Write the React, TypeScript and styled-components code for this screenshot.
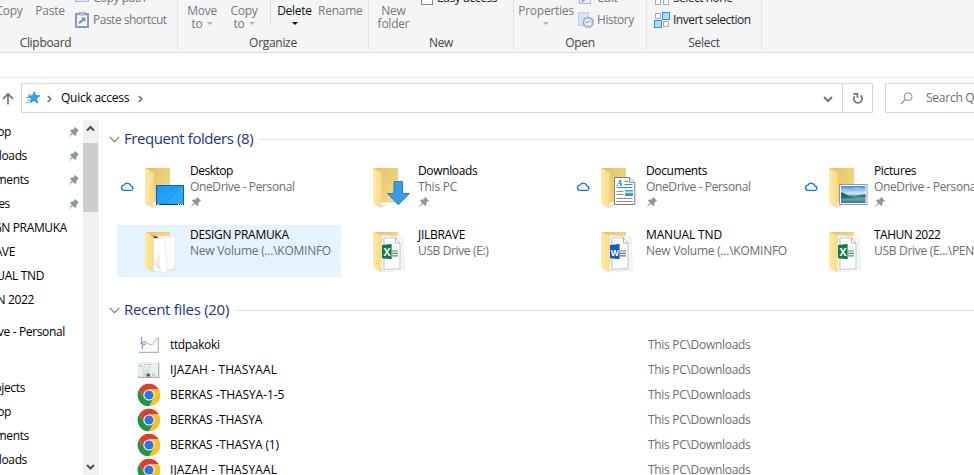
import React from "react";
import styled, { createGlobalStyle } from "styled-components";

const Global = createGlobalStyle`
  * { box-sizing: border-box; }
  html, body { margin: 0; padding: 0; overflow: hidden; background: #fff; }
  body { font: 12px/16px "Open Sans", "Noto Sans", sans-serif; color: #000; letter-spacing: -0.25px; }
  svg { display: block; flex: none; }
`;

const Window = styled.div`
  width: 974px;
  height: 475px;
  overflow: hidden;
  display: flex;
  flex-direction: column;
`;

/* ---------- Ribbon ---------- */
const Ribbon = styled.div`
  height: 53px;
  flex: none;
  display: flex;
  background: #f4f5f7;
  border-bottom: 1px solid #dadbdc;
  overflow: hidden;
`;
const Group = styled.section<{ $width: number; $cut?: number }>`
  width: ${(p) => p.$width}px;
  margin-left: ${(p) => -(p.$cut ?? 0)}px;
  flex: none;
  height: 49px;
  border-right: 1px solid #e1e2e4;
  display: flex;
  flex-direction: column;
`;
const GroupBody = styled.div<{ $pad: number }>`
  height: 35px;
  flex: none;
  display: flex;
  align-items: flex-start;
  padding-left: ${(p) => p.$pad}px;
`;
const GroupTitle = styled.div<{ $shift?: number }>`
  text-align: center;
  color: #444;
  white-space: nowrap;
  height: 14px;
  line-height: 16px;
  padding-left: ${(p) => p.$shift ?? 0}px;
  letter-spacing: -0.3px;
`;
const BigButton = styled.div<{ $width: number; $active?: boolean }>`
  width: ${(p) => p.$width}px;
  flex: none;
  padding-top: 4px;
  line-height: 13px;
  text-align: center;
  white-space: nowrap;
  color: ${(p) => (p.$active ? "#111" : "#777")};
`;
const SecondLine = styled.div`
  height: 13px;
  display: flex;
  align-items: center;
  justify-content: center;
  gap: 4px;
`;
const Caret = styled.i<{ $active?: boolean }>`
  border: 3px solid transparent;
  border-top-color: ${(p) => (p.$active ? "#111" : "#b0b3b8")};
  border-bottom: 0;
`;
const Divider = styled.div`
  width: 1px;
  height: 25px;
  margin-left: 6px;
  background: #dcdddf;
`;
const SmallButtons = styled.div<{ $left?: number }>`
  margin-top: -13px;
  margin-left: ${(p) => p.$left ?? 0}px;
  display: flex;
  flex-direction: column;
`;
const SmallButton = styled.div<{ $active?: boolean; $gap?: number; $track?: number }>`
  height: 22px;
  display: flex;
  align-items: center;
  gap: ${(p) => p.$gap ?? 3}px;
  white-space: nowrap;
  letter-spacing: ${(p) => p.$track ?? -0.5}px;
  color: ${(p) => (p.$active ? "#222" : "#777")};
`;

/* ---------- Address row ---------- */
const Spacer = styled.div`
  height: 25px;
  flex: none;
  border-bottom: 1px solid #e8e8e8;
`;
const AddressRow = styled.div`
  height: 42px;
  flex: none;
  display: flex;
  align-items: flex-start;
  padding-top: 5px;
`;
const UpButton = styled.div`
  width: 21px;
  height: 30px;
  padding: 9px 0 0 2px;
`;
const AddressBox = styled.div`
  width: 822px;
  height: 30px;
  border: 1px solid #d9d9d9;
  display: flex;
  align-items: center;
  padding-left: 4px;
`;
const CrumbArrow = styled.div`
  padding-top: 2px;
  margin-left: 6px;
`;
const Crumb = styled.span`
  margin: 0 3px 0 9px;
  white-space: nowrap;
`;
const DropArrow = styled.div`
  margin-left: auto;
  width: 29px;
  display: flex;
  justify-content: center;
  padding: 2px 0 0 0;
`;
const RefreshBox = styled.div`
  width: 31px;
  height: 30px;
  margin-left: -1px;
  border: 1px solid #d9d9d9;
  display: flex;
  align-items: center;
  justify-content: center;
`;
const SearchBox = styled.div`
  flex: 1;
  height: 30px;
  margin-left: 12px;
  border: 1px solid #d9d9d9;
  border-right: 0;
  display: flex;
  align-items: center;
  gap: 13px;
  padding-left: 14px;
  overflow: hidden;
  color: #6d6d6d;
  white-space: nowrap;
`;

/* ---------- Body ---------- */
const Body = styled.div`
  flex: 1;
  min-height: 0;
  display: flex;
`;
const Tree = styled.nav`
  width: 83px;
  flex: none;
  overflow: hidden;
`;
const TreeRow = styled.div<{ $gap?: number }>`
  height: 24px;
  margin-top: ${(p) => p.$gap ?? 0}px;
  display: flex;
  align-items: center;
  justify-content: space-between;
  padding-right: 3px;
`;
const TreeLabel = styled.div<{ $end: number }>`
  width: ${(p) => p.$end}px;
  display: flex;
  justify-content: flex-end;
  overflow: hidden;
  white-space: nowrap;
  letter-spacing: -0.35px;
`;
const ScrollBar = styled.div`
  width: 16px;
  flex: none;
  background: #f0f0f0;
  display: flex;
  flex-direction: column;
  align-items: center;
`;
const ScrollEnd = styled.div<{ $bottom?: boolean }>`
  height: 23px;
  margin-top: ${(p) => (p.$bottom ? "auto" : 0)};
  margin-right: 1px;
  padding-top: ${(p) => (p.$bottom ? 12 : 5)}px;
`;
const Thumb = styled.div`
  width: 15px;
  height: 69px;
  margin-right: 1px;
  background: #cdcdcd;
`;
const Main = styled.main`
  flex: 1;
  min-width: 0;
  margin-left: 2px;
  border-left: 1px solid #f3f3f3;
  overflow: hidden;
`;
const SectionHead = styled.div<{ $gap: number }>`
  height: 20px;
  margin-top: ${(p) => p.$gap}px;
  padding-left: 7px;
  display: flex;
  align-items: center;
  white-space: nowrap;
`;
const SectionTitle = styled.h2<{ $track: number }>`
  margin: 0 6px 0 4px;
  padding-bottom: 2px;
  font-size: 15px;
  line-height: 18px;
  font-weight: 400;
  color: #1e3287;
  letter-spacing: ${(p) => p.$track}px;
`;
const Rule = styled.div`
  flex: 1;
  height: 1px;
  background: #e2e2e2;
`;
const Tiles = styled.div`
  margin: 12px 0 0 15px;
  width: 912px;
  display: grid;
  grid-template-columns: repeat(4, 224px);
  grid-auto-rows: 52px;
  gap: 12px 4px;
`;
const Tile = styled.div<{ $hover?: boolean }>`
  display: flex;
  background: ${(p) => (p.$hover ? "#e5f3ff" : "transparent")};
`;
const CloudSlot = styled.div`
  width: 25px;
  padding: 19px 0 0 3px;
`;
const IconSlot = styled.div`
  width: 48px;
  padding-top: 4px;
`;
const TileText = styled.div`
  padding-top: 2px;
  white-space: nowrap;
`;
const PinSlot = styled.div`
  padding-top: 1px;
`;
const Label = styled.div<{ $track?: number }>`
  letter-spacing: ${(p) => p.$track ?? -0.35}px;
`;
const Place = styled.div<{ $track?: number }>`
  color: #6d6d6d;
  letter-spacing: ${(p) => p.$track ?? -0.3}px;
`;
const FileList = styled.div`
  margin-top: 12px;
`;
const FileRow = styled.div`
  height: 25px;
  padding-left: 35px;
  display: grid;
  grid-template-columns: 33px 478px 1fr;
  align-items: center;
  white-space: nowrap;
`;

/* ---------- Icons ---------- */
const Pin = () => (
  <svg width="12" height="12" viewBox="0 0 12 12">
    <path d="M7 .8 11.2 5 9.9 5.3 8.4 6.8 8.2 9.2 7.3 9.9 5 7.7.8 11.2.7 11.1 4 6.8 2 4.7 2.8 3.8 5.2 3.6 6.7 2.1Z" fill="#8b969e" />
  </svg>
);
const Cloud = () => (
  <svg width="14" height="12" viewBox="0 0 14 12">
    <path d="M3.4 10.3h7.4a2 2 0 0 0 .3-4A3.9 3.9 0 0 0 3.9 5.2 2.6 2.6 0 0 0 3.4 10.3Z" fill="#fff" stroke="#1079d4" strokeWidth="1.3" />
  </svg>
);
const Chevron = ({ w = 5, h = 8, d = "M.8 1 3.8 4 .8 7", color = "#6b6b6b", sw = 1.5 }) => (
  <svg width={w} height={h} viewBox={`0 0 ${w} ${h}`}>
    <path d={d} fill="none" stroke={color} strokeWidth={sw} />
  </svg>
);

type Overlay = "desktop" | "download" | "document" | "picture" | "papers" | "excel" | "word";

const Sheet = ({ color, letter }: { color: string; letter: string }) => (
  <g>
    <path d="M12 6 33 8.5 34.5 41 13 43Z" fill="#f4f5f6" stroke="#e3e5e7" strokeWidth=".6" />
    <path d="M14 8.8H25.5L30 14V39.5L14 40.5Z" fill="#fff" stroke="#b0b0b0" strokeWidth=".7" />
    <path d="M25.5 8.8V14H30" fill="none" stroke="#a3a3a3" strokeWidth=".8" />
    <path d="M22 22h6M22 24.4h6M22 26.8h6" stroke={color} strokeWidth="1.2" opacity=".8" />
    <path d="M12 16 21.6 15V30.3L12 29.3Z" fill={color} />
    <text x="16.8" y="26.6" textAnchor="middle" fontFamily="Open Sans, sans-serif" fontWeight="700" fontSize={letter === "W" ? 8.5 : 10.5} fill="#fff">{letter}</text>
  </g>
);

const Folder = ({ kind }: { kind: Overlay }) => {
  const filled = kind === "papers" || kind === "excel" || kind === "word";
  const id = `f-${kind}`;
  return (
    <svg width="48" height="48" viewBox="0 0 48 48">
      <defs>
        <linearGradient id={`${id}-b`} x1="0" y1="0" x2="1" y2="1">
          <stop offset="0" stopColor="#e5c062" />
          <stop offset="1" stopColor="#f6dc8c" />
        </linearGradient>
        <linearGradient id={`${id}-a`} x1="0" y1="0" x2="1" y2="0">
          <stop offset="0" stopColor="#ffe9a6" />
          <stop offset="1" stopColor="#f9db88" />
        </linearGradient>
        <linearGradient id={`${id}-c`} x1="0" y1="0" x2="1" y2="1">
          <stop offset="0" stopColor="#1496f5" />
          <stop offset=".5" stopColor="#20a2ff" />
          <stop offset="1" stopColor="#1890f0" />
        </linearGradient>
        <linearGradient id={`${id}-s`} x1="0" y1="0" x2="0" y2="1">
          <stop offset="0" stopColor="#3b8ce8" />
          <stop offset=".45" stopColor="#d4ecfb" />
          <stop offset=".6" stopColor="#4f8d96" />
          <stop offset=".8" stopColor="#5b9fa8" />
          <stop offset="1" stopColor="#2a75ac" />
        </linearGradient>
      </defs>
      <path d="M11 40 18 38.5 14 42 10 43.5Z" fill="#e7e7e7" />
      <path d={filled ? "M3 3H28V7H11Z" : "M3 3H28V37.5H10Z"} fill={`url(#${id}-b)`} />
      {kind === "papers" && (
        <g>
          <path d="M6 5 12 7 19 8.5 12 10Z" fill="#4d3b22" />
          <path d="M16 7.5 33.5 8 33.5 39.5 37 41 25 42Z" fill="#e4e5e7" />
          <path d="M16 7.5 33 8 33 39.5 24 41Z" fill="#fbfbfc" stroke="#e4e6e8" strokeWidth=".5" />
          <path d="M11.5 9.5 23 9 25.3 44.5 11.5 41Z" fill="#fff" stroke="#e2e0e0" strokeWidth=".6" />
          <path d="M15 24C19 29 12 34 17 39M14 33C13 36 15 39 19 40" fill="none" stroke="#f0cfc6" strokeWidth=".9" />
          <path d="M18 28C15 32 20 36 16 41" fill="none" stroke="#d5d2de" strokeWidth=".6" />
        </g>
      )}
      {kind === "excel" && <Sheet color="#107c41" letter="X" />}
      {kind === "word" && <Sheet color="#185abd" letter="W" />}
      <path d="M3 3 11.8 7.5V36L10.6 43.3 3 38.6Z" fill={`url(#${id}-a)`} />
      {kind === "desktop" && (
        <g>
          <rect x="14.5" y="20.5" width="27" height="19" fill={`url(#${id}-c)`} stroke="#0b63ab" />
          <path d="M41 21.5 24 39H41Z" fill="#4ab5ff" opacity=".45" />
          <path d="M14 39.5H42" stroke="#063e70" />
          <path d="M15.5 39.5H17M36 39.5h1M38 39.5h1M40 39.5h1" stroke="#fff" />
        </g>
      )}
      {kind === "download" && (
        <path d="M24 16.5H32.5V28.5H39.5L28.3 39.8 17.5 28.5H24Z" fill="#3a9bec" stroke="#1e76c4" strokeWidth=".9" />
      )}
      {kind === "document" && (
        <g>
          <path d="M16.5 12.5H31.5L36.8 17.5V39.5H16.5Z" fill="#fff" stroke="#7c7c7c" />
          <path d="M31.5 12.5V17.5H36.8" fill="#e8e8e8" stroke="#7c7c7c" strokeWidth=".8" />
          <text x="18.5" y="21" fontFamily="Liberation Serif, serif" fontStyle="italic" fontWeight="700" fontSize="9" fill="#1682d4">A</text>
          <path d="M26.5 16.5h4M26.5 19.5h8M18.5 22.5h16" stroke="#2795dd" />
          <path d="M18.5 26.5h7M18.5 29.5h7M18.5 33.5h16M18.5 36.5h16" stroke="#8b8b8b" />
          <rect x="27" y="25" width="8" height="6" fill={`url(#${id}-s)`} />
        </g>
      )}
      {kind === "picture" && (
        <g>
          <rect x="13.5" y="19.5" width="27.5" height="20" fill="#fff" stroke="#9a9a9a" />
          <rect x="15" y="21" width="24.5" height="17" fill={`url(#${id}-s)`} />
          <path d="M15 27 19 28.5 23 31 30 32.5 15 33.5Z" fill="#2f6b55" />
          <path d="M39.5 29 34 30 28 32H39.5Z" fill="#3d7c62" />
          <path d="M17 24.5h6M27 23.5h8" stroke="#bfe0fa" opacity=".7" />
        </g>
      )}
    </svg>
  );
};

const Chrome = () => (
  <svg width="24" height="24" viewBox="0 0 24 24">
    <path d="M12 12 2.2 6.3A11.3 11.3 0 0 1 21.8 6.4H12Z" fill="#e33b2e" />
    <path d="M12 6.4H21.8A11.3 11.3 0 0 1 12 23.3L16.9 14.8Z" fill="#fcc21b" />
    <path d="M2.2 6.3A11.3 11.3 0 0 0 12 23.3L16.9 14.8 12 12 7.1 14.8Z" fill="#229342" />
    <path d="M12 6.4 7.1 14.8 2.2 6.3Z" fill="#e33b2e" />
    <circle cx="12" cy="12" r="5.6" fill="#fff" />
    <circle cx="12" cy="12" r="4.6" fill="#2a76e8" />
  </svg>
);
const Signature = () => (
  <svg width="24" height="24" viewBox="0 0 24 24">
    <path d="M2 4H21V19H2Z" fill="#fbfbfc" />
    <path d="M21.3 4V19.3H2" fill="none" stroke="#b4b6ba" strokeWidth="1.2" />
    <path d="M4.5 4 5.5 16M3 10.5 9 8.5M6 12 9.5 10.5" fill="none" stroke="#8c90bd" strokeWidth="1.1" />
    <path d="M9 9.5 12 11 15 12 20 5.5" fill="none" stroke="#a3a6b8" strokeWidth=".8" />
  </svg>
);
const Certificate = () => (
  <svg width="24" height="24" viewBox="0 0 24 24">
    <path d="M.5 4H21.5V19H.5Z" fill="#e9f0ef" />
    <path d="M21.7 4.5V19.3H1" fill="none" stroke="#a9adad" strokeWidth="1.2" />
    <path d="M7 6.5h8M6 9h3M11 9h3M5 12h9M5 14h7" stroke="#c4d4d2" strokeWidth="1" />
    <path d="M9.5 15.5h3.5v3H9.5Z" fill="#555c62" />
    <path d="M2 7h3v2H2ZM6 15.5h3v2H6ZM15 15h3v3h-3Z" fill="#c3d0cf" />
  </svg>
);
const PasteShortcutIcon = () => (
  <svg width="14" height="16" viewBox="0 0 14 16">
    <rect x="1" y="2" width="12" height="13" fill="#f2f5fa" stroke="#8799bd" strokeWidth="2" />
    <path d="M4 0h6v3H4Z" fill="#b9c5dc" stroke="#8799bd" strokeWidth=".7" />
    <path d="M4 12V9.5L7.5 7 6 5.5H10.5V10L9 8.6 6 11Z" fill="#7a8db4" />
  </svg>
);
const CopyPathIcon = () => (
  <svg width="14" height="10" viewBox="0 0 14 10">
    <rect x=".5" y=".5" width="13" height="8" fill="#e2e9f4" stroke="#a9b9d6" />
    <path d="M3 6.5h1M5.5 6.5h1M8 6.5h4" stroke="#8799bd" />
  </svg>
);
const HistoryIcon = () => (
  <svg width="16" height="16" viewBox="0 0 16 16">
    <rect x=".5" y=".5" width="10" height="13" fill="#d8e1f1" stroke="#c3d0e6" />
    <circle cx="10.3" cy="10.3" r="4.9" fill="#e7ecf5" stroke="#98a8c4" strokeWidth="1.5" />
    <path d="M10.3 10.3 13 7.6M10.3 10.3H7.5M10.3 6.5v1M10.3 13v1M13 10.3h1" stroke="#8799bd" strokeWidth="1" />
  </svg>
);
const EditIcon = () => (
  <svg width="14" height="14" viewBox="0 0 14 14">
    <rect x="1.5" y=".5" width="11" height="12" fill="#e6edf8" stroke="#a9b9d6" />
    <path d="M4 11 11 3" stroke="#8ea4cb" strokeWidth="2" />
  </svg>
);
const SquaresIcon = ({ invert }: { invert?: boolean }) => (
  <svg width="16" height="16" viewBox="0 0 16 16">
    <rect x="1.5" y="1.5" width="5" height="5" fill="#fafafa" stroke="#aaa" />
    <rect x="9.5" y="9.5" width="5" height="5" fill="#fafafa" stroke="#aaa" />
    <rect x={invert ? 8.5 : 9.5} y={invert ? 0.5 : 1.5} width={invert ? 7 : 5} height={invert ? 7 : 5} fill={invert ? "#a8dcfc" : "#fafafa"} stroke={invert ? "#2f93dc" : "#aaa"} />
    <rect x={invert ? 0.5 : 1.5} y={invert ? 8.5 : 9.5} width={invert ? 7 : 5} height={invert ? 7 : 5} fill={invert ? "#a8dcfc" : "#fafafa"} stroke={invert ? "#2f93dc" : "#aaa"} />
  </svg>
);
const EasyAccessIcon = () => (
  <svg width="12" height="16" viewBox="0 0 12 16">
    <rect x=".5" y="1.5" width="11" height="13" fill="#fafafa" stroke="#858585" />
  </svg>
);
const StarIcon = () => (
  <svg width="15" height="14" viewBox="0 0 15 14">
    <path d="M8.3.7 9.6 4.6 14 4.7 10.6 7.4 11.6 12 7.9 9.4 4.2 11.7 5.3 7.6 2.2 5 6.4 4.7Z" fill="#29a8f0" stroke="#0f86d2" strokeWidth=".7" />
    <path d="M2 3.5h3M0 6.5h3M1 9.5h3M0 11.5h3" stroke="#5bb8ee" strokeWidth=".9" />
  </svg>
);

/* ---------- Data ---------- */
const tree: { label: string; end: number; pin?: boolean; gap?: number }[] = [
  { label: "Desktop", end: 11, pin: true },
  { label: "Downloads", end: 27, pin: true },
  { label: "Documents", end: 29, pin: true },
  { label: "Pictures", end: 10, pin: true },
  { label: "DESIGN PRAMUKA", end: 67 },
  { label: "JILBRAVE", end: 15 },
  { label: "MANUAL TND", end: 44 },
  { label: "TAHUN 2022", end: 34 },
  { label: "OneDrive - Personal", end: 65, gap: 8 },
  { label: "3D Objects", end: 25, gap: 32 },
  { label: "Desktop", end: 11 },
  { label: "Documents", end: 29 },
  { label: "Downloads", end: 27 },
];
const folders: { name: string; place: string; kind: Overlay; cloud?: boolean; pin?: boolean; hover?: boolean; track?: number; placeTrack?: number }[] = [
  { name: "Desktop", place: "OneDrive - Personal", kind: "desktop", cloud: true, pin: true, track: -0.5, placeTrack: -0.37 },
  { name: "Downloads", place: "This PC", kind: "download", pin: true, placeTrack: -0.2 },
  { name: "Documents", place: "OneDrive - Personal", kind: "document", cloud: true, pin: true, placeTrack: -0.37 },
  { name: "Pictures", place: "OneDrive - Personal", kind: "picture", cloud: true, pin: true, placeTrack: -0.37 },
  { name: "DESIGN PRAMUKA", place: "New Volume (...\\KOMINFO", kind: "papers", hover: true, track: -0.3, placeTrack: -0.25 },
  { name: "JILBRAVE", place: "USB Drive (E:)", kind: "excel", track: -0.3, placeTrack: -0.37 },
  { name: "MANUAL TND", place: "New Volume (...\\KOMINFO", kind: "word", track: -0.15, placeTrack: -0.25 },
  { name: "TAHUN 2022", place: "USB Drive (E...\\PENDATAAN", kind: "excel", track: -0.5, placeTrack: -0.3 },
];
const files = [
  { name: "ttdpakoki", icon: <Signature />, track: -0.35 },
  { name: "IJAZAH - THASYAAL", icon: <Certificate />, track: 0.1 },
  { name: "BERKAS -THASYA-1-5", icon: <Chrome />, track: -0.08 },
  { name: "BERKAS -THASYA", icon: <Chrome />, track: -0.15 },
  { name: "BERKAS -THASYA (1)", icon: <Chrome />, track: -0.13 },
  { name: "IJAZAH - THASYAAL", icon: <Chrome />, track: 0.1 },
];

const Section = ({ title, gap, track }: { title: string; gap: number; track: number }) => (
  <SectionHead $gap={gap}>
    <Chevron w={11} h={7} d="M.7.8 5.5 5.6 10.3.8" color="#777" sw={1.1} />
    <SectionTitle $track={track}>{title}</SectionTitle>
    <Rule />
  </SectionHead>
);

export default function App() {
  return (
    <Window>
      <Global />
      <Ribbon>
        <Group $width={264} $cut={86}>
          <GroupBody $pad={74}>
            <BigButton $width={42}>Copy</BigButton>
            <BigButton $width={40}>Paste</BigButton>
            <SmallButtons $left={5}>
              <SmallButton $gap={4}><CopyPathIcon />Copy path</SmallButton>
              <SmallButton $gap={4}><PasteShortcutIcon />Paste shortcut</SmallButton>
            </SmallButtons>
          </GroupBody>
          <GroupTitle>Clipboard</GroupTitle>
        </Group>
        <Group $width={191}>
          <GroupBody $pad={2}>
            <BigButton $width={44}>Move<SecondLine>to <Caret /></SecondLine></BigButton>
            <BigButton $width={40}>Copy<SecondLine>to <Caret /></SecondLine></BigButton>
            <Divider />
            <BigButton $width={47} $active>Delete<SecondLine><Caret $active /></SecondLine></BigButton>
            <BigButton $width={41}>Rename</BigButton>
          </GroupBody>
          <GroupTitle $shift={0}>Organize</GroupTitle>
        </Group>
        <Group $width={145}>
          <GroupBody $pad={4}>
            <BigButton $width={41}>New<br />folder</BigButton>
            <SmallButtons $left={7}>
              <SmallButton $active $gap={4} $track={-0.4}><EasyAccessIcon />Easy access</SmallButton>
            </SmallButtons>
          </GroupBody>
          <GroupTitle $shift={-3}>New</GroupTitle>
        </Group>
        <Group $width={133}>
          <GroupBody $pad={2}>
            <BigButton $width={60}>Properties<SecondLine><Caret /></SecondLine></BigButton>
            <SmallButtons $left={2}>
              <SmallButton><EditIcon />&nbsp;Edit</SmallButton>
              <SmallButton $track={-0.45}><HistoryIcon />History</SmallButton>
            </SmallButtons>
          </GroupBody>
          <GroupTitle>Open</GroupTitle>
        </Group>
        <Group $width={115}>
          <GroupBody $pad={7}>
            <SmallButtons>
              <SmallButton $active><SquaresIcon />Select none</SmallButton>
              <SmallButton $active><SquaresIcon invert />Invert selection</SmallButton>
            </SmallButtons>
          </GroupBody>
          <GroupTitle>Select</GroupTitle>
        </Group>
      </Ribbon>
      <Spacer />
      <AddressRow>
        <UpButton>
          <svg width="12" height="13" viewBox="0 0 12 13">
            <path d="M6 12.5V1.8M1 6.8 6 1.8 11 6.8" fill="none" stroke="#777" strokeWidth="1.7" />
          </svg>
        </UpButton>
        <AddressBox>
          <StarIcon />
          <CrumbArrow><Chevron /></CrumbArrow>
          <Crumb>Quick access</Crumb>
          <CrumbArrow><Chevron /></CrumbArrow>
          <DropArrow><Chevron w={10} h={7} d="M1 1 5 5 9 1" color="#777" sw={2} /></DropArrow>
        </AddressBox>
        <RefreshBox>
          <svg width="12" height="13" viewBox="0 0 12 13">
            <path d="M8.6 3.4A4.2 4.2 0 1 1 2.6 4.2" fill="none" stroke="#777" strokeWidth="1.8" />
            <path d="M1.2 1.9H5.4V6" fill="none" stroke="#777" strokeWidth="1.6" />
          </svg>
        </RefreshBox>
        <SearchBox>
          <svg width="13" height="13" viewBox="0 0 13 13">
            <circle cx="8.2" cy="4.7" r="3.9" fill="none" stroke="#8a8a8a" />
            <path d="M5.4 7.5.8 12.2" stroke="#8a8a8a" strokeWidth="1.1" />
          </svg>
          Search Quick access
        </SearchBox>
      </AddressRow>
      <Body>
        <Tree>
          {tree.map((t, i) => (
            <TreeRow key={i} $gap={t.gap}>
              <TreeLabel $end={t.end}>{t.label}</TreeLabel>
              {t.pin && <Pin />}
            </TreeRow>
          ))}
        </Tree>
        <ScrollBar>
          <ScrollEnd><Chevron w={9} h={7} d="M1 5.5 4.5 2 8 5.5" color="#505050" sw={2} /></ScrollEnd>
          <Thumb />
          <ScrollEnd $bottom><Chevron w={9} h={7} d="M1 1 4.5 4.5 8 1" color="#505050" sw={2} /></ScrollEnd>
        </ScrollBar>
        <Main>
          <Section title="Frequent folders (8)" gap={9} track={-0.42} />
          <Tiles>
            {folders.map((f) => (
              <Tile key={f.name} $hover={f.hover}>
                <CloudSlot>{f.cloud && <Cloud />}</CloudSlot>
                <IconSlot><Folder kind={f.kind} /></IconSlot>
                <TileText>
                  <Label $track={f.track}>{f.name}</Label>
                  <Place $track={f.placeTrack}>{f.place}</Place>
                  {f.pin && <PinSlot><Pin /></PinSlot>}
                </TileText>
              </Tile>
            ))}
          </Tiles>
          <Section title="Recent files (20)" gap={23} track={-0.28} />
          <FileList>
            {files.map((f, i) => (
              <FileRow key={i}>
                {f.icon}
                <Label $track={f.track}>{f.name}</Label>
                <Place>This PC\Downloads</Place>
              </FileRow>
            ))}
          </FileList>
        </Main>
      </Body>
    </Window>
  );
}
